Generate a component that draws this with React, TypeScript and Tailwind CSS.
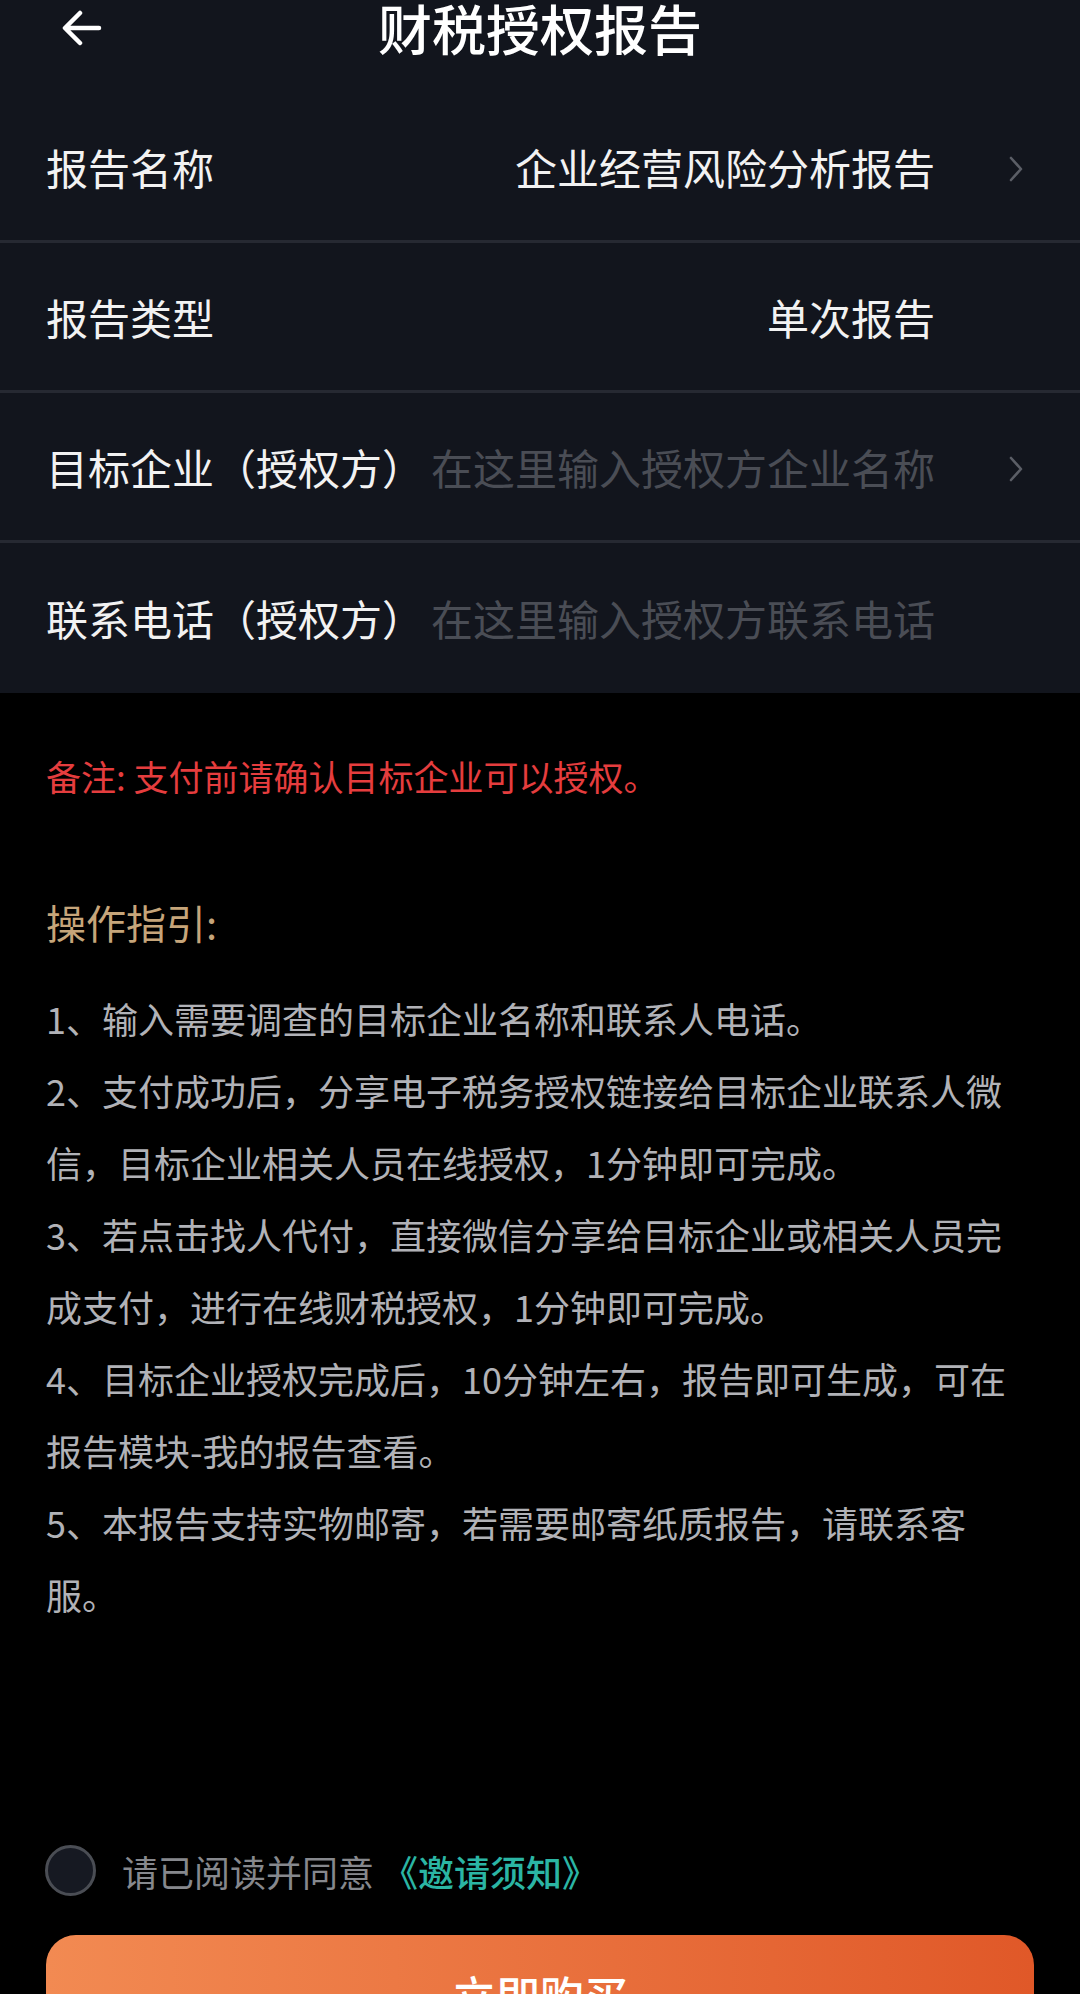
import React from "react";

const font = { fontFamily: '"Noto Sans CJK SC", "Noto Sans", sans-serif' };

type RowProps = {
  label: string;
  value: string;
  placeholder?: boolean;
  arrow?: boolean;
  last?: boolean;
};

const Chevron = () => (
  <svg width="16" height="28" viewBox="0 0 16 28" fill="none">
    <path d="M3 3 L13 14 L3 25" stroke="#5b5e66" strokeWidth="2.6" strokeLinecap="round" strokeLinejoin="round" />
  </svg>
);

const Row = ({ label, value, placeholder, arrow, last }: RowProps) => (
  <div
    className={`flex items-center h-[150px] pl-[46px] pr-[56px] ${
      last ? "" : "border-b-[3px] border-[#262932]"
    }`}
  >
    <span className="text-[42px] leading-none text-[#f2f2f2] whitespace-nowrap">{label}</span>
    <span
      className={`flex-1 text-right text-[42px] leading-none whitespace-nowrap ${
        placeholder ? "text-[#4a4d55]" : "text-[#f2f2f2]"
      }`}
    >
      {value}
    </span>
    <span className="w-[16px] ml-[73px] mt-[4px] flex items-center">{arrow ? <Chevron /> : null}</span>
  </div>
);

const steps = [
  "1、输入需要调查的目标企业名称和联系人电话。",
  "2、支付成功后，分享电子税务授权链接给目标企业联系人微信，目标企业相关人员在线授权，1分钟即可完成。",
  "3、若点击找人代付，直接微信分享给目标企业或相关人员完成支付，进行在线财税授权，1分钟即可完成。",
  "4、目标企业授权完成后，10分钟左右，报告即可生成，可在报告模块-我的报告查看。",
  "5、本报告支持实物邮寄，若需要邮寄纸质报告，请联系客服。",
];

export default function App() {
  return (
    <div className="w-[1080px] h-[1994px] bg-black overflow-hidden" style={font}>
      <div className="bg-[#12151d]">
        <div className="relative h-[93px] flex justify-center">
          <svg
            className="absolute left-[61px] top-[10px]"
            width="42"
            height="36"
            viewBox="0 0 42 36"
            fill="none"
          >
            <path
              d="M38 18 H5 M19 3 L4 18 L19 33"
              stroke="#ffffff"
              strokeWidth="4.5"
              strokeLinecap="round"
              strokeLinejoin="round"
            />
          </svg>
          <h1 className="text-[54px] leading-[56px] font-medium text-white">财税授权报告</h1>
        </div>
        <Row label="报告名称" value="企业经营风险分析报告" arrow />
        <Row label="报告类型" value="单次报告" />
        <Row label="目标企业（授权方）" value="在这里输入授权方企业名称" placeholder arrow />
        <Row label="联系电话（授权方）" value="在这里输入授权方联系电话" placeholder last />
      </div>

      <div className="pl-[46px] pr-[56px]">
        <p className="mt-[58px] text-[35px] leading-[50px] text-[#e53d3e]">备注: 支付前请确认目标企业可以授权。</p>
        <h2 className="mt-[91px] text-[40px] leading-[60px] text-[#c6a57a]">操作指引:</h2>
        <div className="mt-[30px] text-[36px] leading-[72px] text-[#b1b2b7]">
          {steps.map((s) => (
            <p key={s}>{s}</p>
          ))}
        </div>
      </div>

      <div className="mt-[215px] flex items-center pl-[45px]">
        <span className="w-[51px] h-[51px] rounded-full border-[3px] border-[#4a4d54] bg-[#161922]" />
        <span className="ml-[26px] text-[36px] leading-none text-[#86888d]">请已阅读并同意</span>
        <span className="ml-[8px] text-[36px] leading-none font-medium text-[#2bb5a4]">《邀请须知》</span>
      </div>

      <div className="mt-[39px] mx-[46px]">
        <button
          type="button"
          className="w-full h-[120px] rounded-[30px] bg-gradient-to-r from-[#f28a52] to-[#e05828] text-white text-[44px] font-medium"
        >
          立即购买
        </button>
      </div>
    </div>
  );
}
